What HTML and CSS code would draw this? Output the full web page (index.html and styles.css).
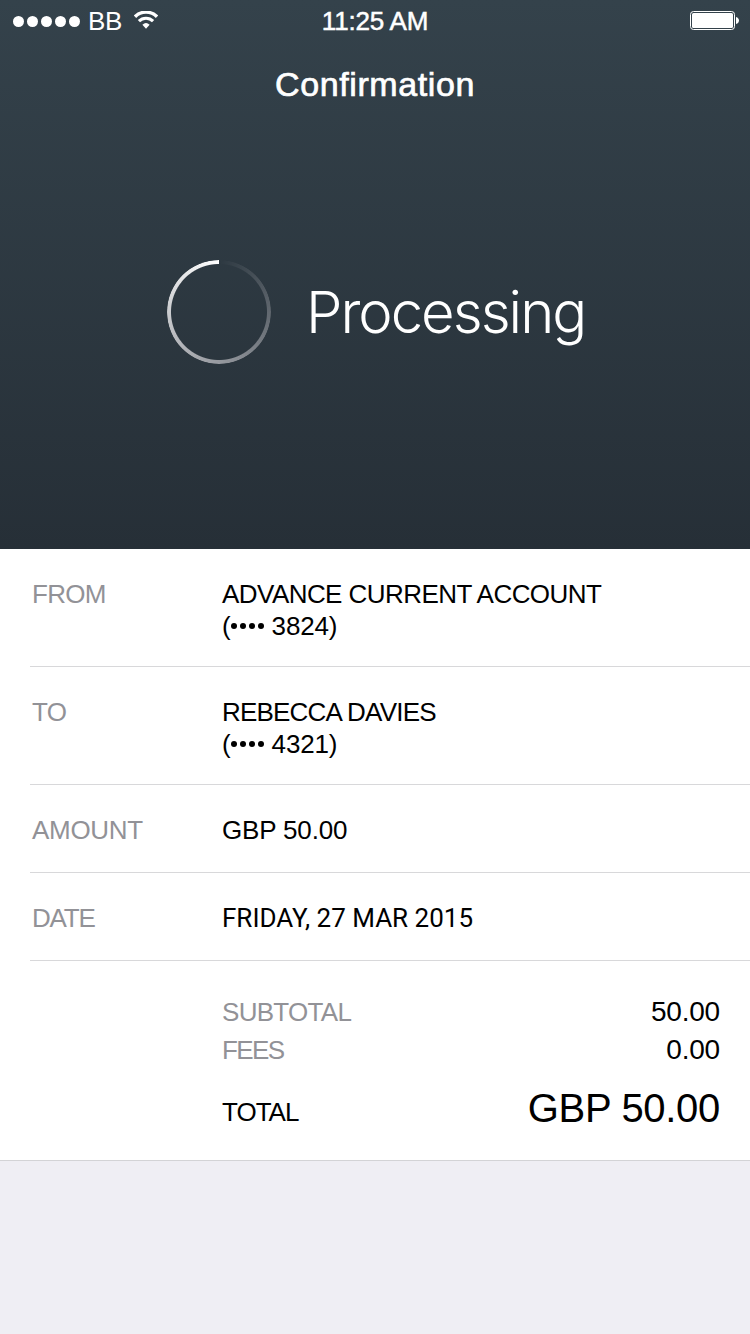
FILE: index.html
```html
<!DOCTYPE html>
<html lang="en">
<head>
  <meta charset="UTF-8" />
  <meta name="viewport" content="width=device-width, initial-scale=1.0" />
  <title>Confirmation</title>
  <link rel="stylesheet" href="styles.css">
</head>
<body>
  <header class="header">
    <div class="status-bar">
      <div class="carrier">
        <span class="signal"><i></i><i></i><i></i><i></i><i></i></span>
        <span class="carrier-name">BB</span>
        <svg class="wifi" width="24" height="18" viewBox="0 0 24 18">
          <path d="M1 5.7a15.6 15.6 0 0 1 22 0" fill="none" stroke="#fff" stroke-width="3.4" />
          <path d="M4.9 10.2a10 10 0 0 1 14.2 0" fill="none" stroke="#fff" stroke-width="3.1" />
          <path d="M8.4 13.8q3.6-3.4 7.2 0L12 17.8z" fill="#fff" />
        </svg>
      </div>
      <span class="clock">11:25 AM</span>
      <svg class="battery" width="49" height="20" viewBox="0 0 49 20">
        <rect x="0.5" y="0.5" width="44" height="18" rx="3" fill="none" stroke="#fff" />
        <rect x="2" y="2" width="41" height="15" rx="1.5" fill="#fff" />
        <path d="M46 6c4 1 4 6 0 7z" fill="#fff" />
      </svg>
    </div>
    <h1>Confirmation</h1>
    <div class="processing">
      <div class="spinner"></div>
      <span class="processing-text">Processing</span>
    </div>
  </header>

  <main class="details">
    <div class="row">
      <span class="label">FROM</span>
      <div class="value">
        <div class="from-name">ADVANCE CURRENT ACCOUNT</div>
        <div class="account">(<span class="dots"><i></i><i></i><i></i><i></i></span> 3824)</div>
      </div>
    </div>
    <div class="row">
      <span class="label">TO</span>
      <div class="value">
        <div class="to-name">REBECCA DAVIES</div>
        <div class="account">(<span class="dots"><i></i><i></i><i></i><i></i></span> 4321)</div>
      </div>
    </div>
    <div class="row">
      <span class="label amount-label">AMOUNT</span>
      <div class="value amount">GBP 50.00</div>
    </div>
    <div class="row">
      <span class="label date-label">DATE</span>
      <div class="value date">FRIDAY, 27 MAR 2015</div>
    </div>
    <div class="summary">
      <div class="line"><span class="label">SUBTOTAL</span><span class="sum">50.00</span></div>
      <div class="line"><span class="label fees-label">FEES</span><span class="sum">0.00</span></div>
      <div class="line total"><span class="total-label">TOTAL</span><span class="total-sum">GBP 50.00</span></div>
    </div>
  </main>
</body>
</html>
```

FILE: styles.css
```css
* {
  box-sizing: border-box;
}
body {
  margin: 0;
  width: 750px;
  min-height: 1334px;
  background: #efeef4;
  color: #000;
  font-family: "Helvetica Neue", "Liberation Sans", Arial, sans-serif;
  font-size: 26px;
  line-height: 32px;
}

/* header */
.header {
  height: 549px;
  background: linear-gradient(#34424b, #262f37);
  color: #fff;
}
.status-bar {
  display: grid;
  grid-template-columns: 1fr auto 1fr;
  align-items: center;
  height: 42px;
  padding: 0 11px 0 13px;
}
.carrier {
  display: flex;
  align-items: center;
}
.signal {
  display: flex;
  gap: 3px;
}
.signal i {
  width: 11px;
  height: 11px;
  border-radius: 50%;
  background: #fff;
}
.carrier-name {
  margin-left: 8px;
  letter-spacing: -0.3px;
}
.wifi {
  margin-left: 12px;
  margin-top: -2px;
}
.clock {
  margin-left: -2px;
  letter-spacing: -0.2px;
  -webkit-text-stroke: 0.5px #fff;
}
.battery {
  justify-self: end;
}
h1 {
  margin: 22px 0 0;
  font-size: 34px;
  font-weight: normal;
  line-height: 40px;
  text-align: center;
  letter-spacing: 0.6px;
  -webkit-text-stroke: 0.7px #fff;
}
.processing {
  display: flex;
  align-items: center;
  height: 104px;
  margin-top: 156px;
  padding-left: 167px;
}
.spinner {
  width: 104px;
  height: 104px;
  border-radius: 50%;
  background: conic-gradient(rgba(255, 255, 255, 0), #96999f 50%, #fff);
  -webkit-mask: radial-gradient(circle, transparent 47.5px, #000 48.5px);
  mask: radial-gradient(circle, transparent 47.5px, #000 48.5px);
}
.processing-text {
  margin-left: 35px;
  font-family: Inter, sans-serif;
  font-size: 58px;
  font-weight: 300;
  line-height: 70px;
  letter-spacing: -2px;
}

/* transfer details */
.details {
  height: 612px;
  background: #fff;
  border-bottom: 1px solid #d3d3d6;
}
.row {
  display: flex;
  margin-left: 30px;
  padding: 29px 0 24px 2px;
  border-bottom: 1px solid #d8d8da;
}
.row .label {
  width: 190px;
}
.row .value {
  min-height: 34px;
}
.label {
  color: #929297;
  letter-spacing: -0.7px;
}
.label.amount-label {
  letter-spacing: -0.3px;
}
.label.date-label {
  letter-spacing: -1.2px;
}
.label.fees-label {
  letter-spacing: -1.6px;
}
.value {
  letter-spacing: -0.55px;
}
.to-name {
  letter-spacing: -0.8px;
}
.account,
.value.amount {
  letter-spacing: -0.15px;
}
.dots {
  display: inline-flex;
  gap: 3px;
  margin-right: 1px;
  vertical-align: 6px;
}
.dots i {
  width: 6px;
  height: 6px;
  border-radius: 50%;
  background: #000;
}
.value.date {
  font-family: Roboto, sans-serif;
  letter-spacing: 0;
}

/* summary */
.summary {
  padding: 32px 30px 0 222px;
}
.line {
  display: flex;
  justify-content: space-between;
  height: 38px;
  line-height: 38px;
}
.sum {
  font-size: 28px;
  letter-spacing: -0.2px;
}
.total {
  height: 50px;
  margin-top: 18px;
}
.total-label {
  line-height: 50px;
  letter-spacing: -1px;
}
.total-sum {
  font-size: 40px;
  line-height: 42px;
  letter-spacing: -0.3px;
}
```
